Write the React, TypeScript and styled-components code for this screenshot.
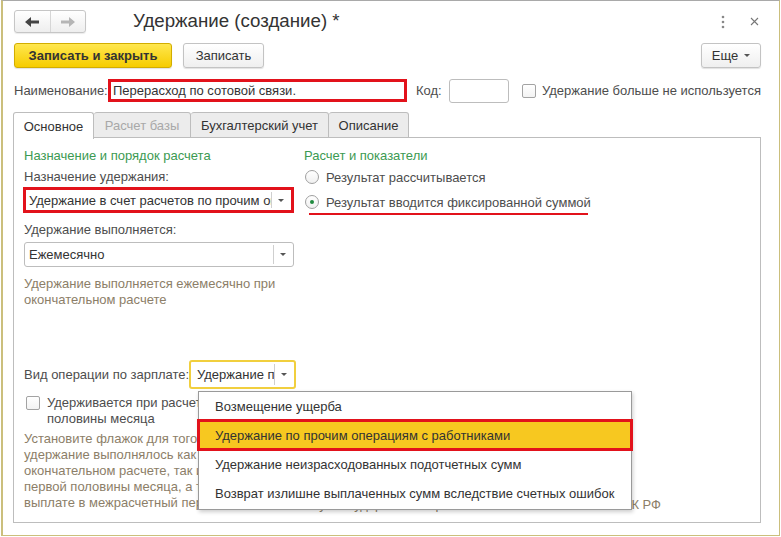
import React from 'react';
import styled, { createGlobalStyle } from 'styled-components';

const Global = createGlobalStyle`
  html, body { margin: 0; padding: 0; background: #fff; }
  body { font-family: "Liberation Sans", Arial, sans-serif; font-size: 13px; color: #4d4d4d; }
  * { box-sizing: border-box; }
`;

const Window = styled.div`
  margin-left: 1px;
  width: 779px;
  height: 536px;
  border: 1px solid #cbbf7c;
  border-left-width: 2px;
  border-top: 1px solid #a9a9a9;
  padding: 9px 18px 0 11px;
  display: flex;
  flex-direction: column;
  overflow: hidden;
  background: #fff;
`;

const HeaderRow = styled.div`
  display: flex;
  align-items: center;
  height: 23px;
`;

const NavGroup = styled.div`
  display: flex;
  width: 72px;
  height: 23px;
  border: 1px solid #c6c6c6;
  border-radius: 3px;
  background: linear-gradient(#ffffff, #eeeeee);
  box-shadow: 0 1px 1px rgba(0, 0, 0, 0.08);
`;

const NavBtn = styled.div<{ $first?: boolean }>`
  flex: 1;
  display: flex;
  align-items: center;
  justify-content: center;
  border-left: ${(p) => (p.$first ? 'none' : '1px solid #d6d6d6')};
`;

const Title = styled.div`
  margin-left: 47px;
  font-size: 18.7px;
  color: #333;
  flex: 1;
  padding-bottom: 1px;
`;

const IconBtn = styled.div<{ $ml?: number }>`
  width: 14px;
  height: 23px;
  margin-left: ${(p) => p.$ml ?? 0}px;
  display: flex;
  align-items: center;
  justify-content: center;
`;

const ButtonRow = styled.div`
  display: flex;
  align-items: center;
  margin-top: 10px;
  height: 25px;
`;

const Button = styled.div<{ $primary?: boolean; $w: number; $last?: boolean }>`
  width: ${(p) => p.$w}px;
  height: 25px;
  display: flex;
  align-items: center;
  justify-content: center;
  gap: 6px;
  border-radius: 3px;
  font-size: 13px;
  color: #333;
  font-weight: ${(p) => (p.$primary ? 'bold' : 'normal')};
  border: 1px solid ${(p) => (p.$primary ? '#d2ad00' : '#c3c3c3')};
  background: ${(p) =>
    p.$primary ? 'linear-gradient(#ffe74f, #f6cc00)' : 'linear-gradient(#ffffff, #efefef)'};
  box-shadow: 0 1px 1px rgba(0, 0, 0, 0.12);
  margin-right: ${(p) => (p.$last ? 0 : 11)}px;
`;

const Spacer = styled.div`
  flex: 1;
`;

const Caret = styled.span`
  width: 0;
  height: 0;
  border-left: 3px solid transparent;
  border-right: 3px solid transparent;
  border-top: 3px solid #555;
`;

const FieldRow = styled.div`
  display: flex;
  align-items: center;
  margin-top: 11px;
  height: 23px;
`;

const Label = styled.span<{ $w?: number; $ml?: number }>`
  color: #4d4d4d;
  white-space: nowrap;
  flex-shrink: 0;
  width: ${(p) => (p.$w ? `${p.$w}px` : 'auto')};
  margin-left: ${(p) => p.$ml ?? 0}px;
  margin-right: ${(p) => (p.$w ? 0 : 4)}px;
`;

const TextInput = styled.div<{ $w: number; $red?: boolean }>`
  width: ${(p) => p.$w}px;
  height: ${(p) => (p.$red ? 23 : 24)}px;
  border: ${(p) => (p.$red ? '3px solid #e2121b' : '1px solid #bdbdbd')};
  border-radius: ${(p) => (p.$red ? 0 : 3)}px;
  display: flex;
  align-items: center;
  padding-left: ${(p) => (p.$red ? 2 : 4)}px;
  color: #333;
  background: #fff;
  flex-shrink: 0;
`;

const CheckBox = styled.span`
  display: inline-block;
  width: 14px;
  height: 14px;
  border: 1px solid #a3a3a3;
  border-radius: 2px;
  background: linear-gradient(#fff, #f3f3f3);
  flex-shrink: 0;
`;

const CheckLabel = styled.label`
  display: flex;
  align-items: center;
  gap: 6px;
  margin-left: 13px;
  color: #4d4d4d;
  white-space: nowrap;
  flex-shrink: 0;
`;

const Tabs = styled.div`
  display: flex;
  margin-top: 10px;
  height: 26px;
  margin-left: -1px;
  position: relative;
  z-index: 1;
`;

const Tab = styled.div<{ $active?: boolean; $disabled?: boolean; $w: number }>`
  width: ${(p) => p.$w}px;
  height: ${(p) => (p.$active ? 27 : 26)}px;
  display: flex;
  align-items: center;
  justify-content: center;
  white-space: nowrap;
  border: 1px solid #bdbdbd;
  border-bottom: ${(p) => (p.$active ? 'none' : '1px solid #bdbdbd')};
  border-left: ${(p) => (p.$active ? '1px solid #bdbdbd' : 'none')};
  border-radius: 3px 3px 0 0;
  background: ${(p) => (p.$active ? '#fff' : '#ececec')};
  color: ${(p) => (p.$disabled ? '#a8a8a8' : '#333')};
`;

const Panel = styled.div`
  margin-left: -1px;
  height: 386px;
  margin-top: -1px;
  border: 1px solid #bdbdbd;
  padding: 10px 10px 9px 10px;
  display: flex;
  gap: 10px;
`;

const LeftCol = styled.div`
  width: 270px;
  display: flex;
  flex-direction: column;
`;

const RightCol = styled.div`
  flex: 1;
  display: flex;
  flex-direction: column;
`;

const GroupTitle = styled.div`
  color: #3c9a52;
  line-height: 16px;
`;

const FieldLabel = styled.div<{ $mt: number }>`
  margin-top: ${(p) => p.$mt}px;
  line-height: 16px;
`;

const Combo = styled.div<{ $w: number; $h: number; $variant?: 'red' | 'focus'; $mt?: number; $ml?: number }>`
  position: relative;
  display: flex;
  align-items: stretch;
  width: ${(p) => p.$w}px;
  height: ${(p) => p.$h}px;
  margin-top: ${(p) => p.$mt ?? 0}px;
  margin-left: ${(p) => p.$ml ?? 0}px;
  border: ${(p) =>
    p.$variant === 'red'
      ? '3px solid #e2121b'
      : p.$variant === 'focus'
      ? '2px solid #f1cf3e'
      : '1px solid #bdbdbd'};
  border-radius: ${(p) => (p.$variant === 'red' ? 0 : 3)}px;
  background: #fff;
  flex-shrink: 0;
`;

const ComboText = styled.div<{ $pl?: number }>`
  flex: 1;
  display: flex;
  align-items: center;
  padding-left: ${(p) => p.$pl ?? 4}px;
  overflow: hidden;
  white-space: nowrap;
  color: #333;
`;

const ComboBtn = styled.div`
  width: 20px;
  display: flex;
  align-items: center;
  justify-content: center;
  position: relative;
  flex-shrink: 0;
  &::before {
    content: '';
    position: absolute;
    left: 0;
    top: 2px;
    bottom: 2px;
    border-left: 1px solid #cfcfcf;
  }
`;

const Hint = styled.div<{ $mt: number }>`
  margin-top: ${(p) => p.$mt}px;
  color: #8c7e68;
  line-height: 16px;
  white-space: pre;
`;

const OpRow = styled.div`
  display: flex;
  align-items: center;
  margin-top: 52px;
  position: relative;
`;

const CheckRow = styled.div`
  display: flex;
  align-items: flex-start;
  gap: 7px;
  margin-top: 7px;
  margin-left: 2px;
`;

const CheckText = styled.div`
  line-height: 16px;
  white-space: pre;
  color: #4d4d4d;
  margin-top: -1px;
`;

const Dropdown = styled.div`
  position: absolute;
  left: 174px;
  top: 31px;
  width: 434px;
  height: 119px;
  background: #fff;
  border: 1px solid #9a9a9a;
  box-shadow: 1px 2px 4px rgba(0, 0, 0, 0.2);
  z-index: 5;
  display: flex;
  flex-direction: column;
`;

const DropItem = styled.div<{ $selected?: boolean }>`
  height: ${(p) => (p.$selected ? 32 : 29)}px;
  display: flex;
  align-items: center;
  padding-left: ${(p) => (p.$selected ? 15 : 16)}px;
  color: #333;
  white-space: nowrap;
  margin: ${(p) => (p.$selected ? '-2px -2px -1px -2px' : '0')};
  background: ${(p) => (p.$selected ? '#f7c820' : 'transparent')};
  border: ${(p) => (p.$selected ? '3px solid #e2121b' : 'none')};
  position: relative;
`;

const RadioRow = styled.div<{ $mt: number }>`
  display: flex;
  align-items: center;
  gap: 7px;
  margin-top: ${(p) => p.$mt}px;
  margin-left: 1px;
  height: 16px;
  color: #4d4d4d;
  position: relative;
`;

const Radio = styled.span<{ $checked?: boolean }>`
  width: 14px;
  height: 14px;
  border-radius: 50%;
  border: 1px solid #a0a0a0;
  background: linear-gradient(#fff, #f0f0f0);
  display: flex;
  align-items: center;
  justify-content: center;
  flex-shrink: 0;
  &::after {
    content: '';
    width: 4px;
    height: 4px;
    border-radius: 50%;
    background: ${(p) => (p.$checked ? '#1f8a3e' : 'transparent')};
  }
`;

const RedUnderline = styled.div`
  position: absolute;
  left: 4px;
  width: 279px;
  top: 19px;
  height: 2px;
  background: #e2121b;
`;

const BottomHint = styled.div`
  margin-top: auto;
  width: 357px;
  text-align: right;
  color: #8c7e68;
  line-height: 16px;
  white-space: nowrap;
`;

const ArrowLeft = () => (
  <svg width="14" height="10" viewBox="0 0 14 10">
    <polygon points="0,5 6,0 6,3.5 14,3.5 14,6.5 6,6.5 6,10" fill="#444" />
  </svg>
);
const ArrowRight = () => (
  <svg width="14" height="10" viewBox="0 0 14 10">
    <polygon points="14,5 8,0 8,3.5 0,3.5 0,6.5 8,6.5 8,10" fill="#b5b5b5" />
  </svg>
);
const Kebab = () => (
  <svg width="4" height="14" viewBox="0 0 4 14">
    <circle cx="2" cy="2" r="1.3" fill="#888" />
    <circle cx="2" cy="7" r="1.3" fill="#888" />
    <circle cx="2" cy="12" r="1.3" fill="#888" />
  </svg>
);
const Close = () => (
  <svg width="9" height="9" viewBox="0 0 9 9">
    <path d="M1 1 L8 8 M8 1 L1 8" stroke="#777" strokeWidth="1.1" />
  </svg>
);

export default function App() {
  return (
    <>
      <Global />
      <Window>
        <HeaderRow>
          <NavGroup>
            <NavBtn $first>
              <ArrowLeft />
            </NavBtn>
            <NavBtn>
              <ArrowRight />
            </NavBtn>
          </NavGroup>
          <Title>Удержание (создание) *</Title>
          <IconBtn>
            <Kebab />
          </IconBtn>
          <IconBtn $ml={17}>
            <Close />
          </IconBtn>
        </HeaderRow>

        <ButtonRow>
          <Button $primary $w={158}>Записать и закрыть</Button>
          <Button $w={81}>Записать</Button>
          <Spacer />
          <Button $w={60} $last>
            Еще <Caret />
          </Button>
        </ButtonRow>

        <FieldRow>
          <Label $w={94}>Наименование:</Label>
          <TextInput $w={299} $red>Перерасход по сотовой связи.</TextInput>
          <Label $w={33} $ml={9}>Код:</Label>
          <TextInput $w={60} />
          <CheckLabel>
            <CheckBox />
            Удержание больше не используется
          </CheckLabel>
        </FieldRow>

        <Tabs>
          <Tab $active $w={81}>Основное</Tab>
          <Tab $disabled $w={97}>Расчет базы</Tab>
          <Tab $w={138}>Бухгалтерский учет</Tab>
          <Tab $w={80}>Описание</Tab>
        </Tabs>

        <Panel>
          <LeftCol>
            <GroupTitle>Назначение и порядок расчета</GroupTitle>
            <FieldLabel $mt={5}>Назначение удержания:</FieldLabel>
            <Combo $w={271} $h={26} $variant="red" $mt={2} $ml={-1}>
              <ComboText $pl={3}>Удержание в счет расчетов по прочим операциям</ComboText>
              <ComboBtn>
                <Caret />
              </ComboBtn>
            </Combo>
            <FieldLabel $mt={9}>Удержание выполняется:</FieldLabel>
            <Combo $w={270} $h={25} $mt={4}>
              <ComboText>Ежемесячно</ComboText>
              <ComboBtn>
                <Caret />
              </ComboBtn>
            </Combo>
            <Hint $mt={9}>{'Удержание выполняется ежемесячно при\nокончательном расчете'}</Hint>

            <OpRow>
              <Label $w={165}>Вид операции по зарплате:</Label>
              <Combo $w={107} $h={29} $variant="focus">
                <ComboText $pl={6}>Удержание по прочим операциям</ComboText>
                <ComboBtn>
                  <Caret />
                </ComboBtn>
              </Combo>
              <Dropdown>
                <DropItem>Возмещение ущерба</DropItem>
                <DropItem $selected>Удержание по прочим операциям с работниками</DropItem>
                <DropItem>Удержание неизрасходованных подотчетных сумм</DropItem>
                <DropItem>Возврат излишне выплаченных сумм вследствие счетных ошибок</DropItem>
              </Dropdown>
            </OpRow>

            <CheckRow>
              <CheckBox />
              <CheckText>{'Удерживается при расчете зарплаты первой\nполовины месяца'}</CheckText>
            </CheckRow>
            <Hint $mt={4}>
              {'Установите флажок для того, чтобы\nудержание выполнялось как при\nокончательном расчете, так и при расчете\nпервой половины месяца, а также при\nвыплате в межрасчетный период.'}
            </Hint>
          </LeftCol>

          <RightCol>
            <GroupTitle>Расчет и показатели</GroupTitle>
            <RadioRow $mt={5}>
              <Radio />
              Результат рассчитывается
            </RadioRow>
            <RadioRow $mt={9}>
              <Radio $checked />
              Результат вводится фиксированной суммой
              <RedUnderline />
            </RadioRow>
            <BottomHint>Сумма удержаний ограничивается согласно ст. 138 ТК РФ</BottomHint>
          </RightCol>
        </Panel>
      </Window>
    </>
  );
}
